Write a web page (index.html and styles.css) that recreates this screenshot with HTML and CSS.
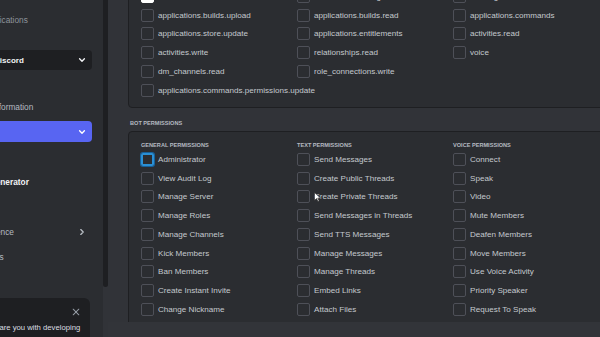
FILE: index.html
```html
<!DOCTYPE html>
<html lang="en">
<head>
    <meta charset="UTF-8">
    <meta name="viewport" content="width=device-width">
    <title>OAuth2 URL Generator</title>
    <link rel="stylesheet" href="styles.css">
</head>
<body>
<div class="app">
    <aside class="sidebar">
        <nav class="nav">
            <a class="back">
                <svg width="8" height="8" viewBox="0 0 10 10"><path d="M8.5 5H1.5M4.5 2 1.5 5l3 3" fill="none" stroke="currentColor" stroke-width="1.4" stroke-linecap="round" stroke-linejoin="round"/></svg>
                <span>All Applications</span>
            </a>
            <div class="app-select">
                <span class="avatar"></span>
                <span class="app-name">Discord</span>
                <svg class="chev" width="8" height="8" viewBox="0 0 10 10"><path d="M2 3.5l3 3 3-3" fill="none" stroke="currentColor" stroke-width="1.7" stroke-linecap="round" stroke-linejoin="round"/></svg>
            </div>
            <a class="nav-item">General Information</a>
            <a class="nav-item active">OAuth2
                <svg class="chev" width="8" height="8" viewBox="0 0 10 10"><path d="M2 3.5l3 3 3-3" fill="none" stroke="currentColor" stroke-width="1.7" stroke-linecap="round" stroke-linejoin="round"/></svg>
            </a>
            <a class="nav-item sub">General</a>
            <a class="nav-item sub current">URL Generator</a>
            <a class="nav-item">Bot</a>
            <a class="nav-item">Rich Presence
                <svg class="chev" width="8" height="8" viewBox="0 0 10 10"><path d="M3.5 2l3 3-3 3" fill="none" stroke="currentColor" stroke-width="1.7" stroke-linecap="round" stroke-linejoin="round"/></svg>
            </a>
            <a class="nav-item">App Testers</a>
        </nav>
    </aside>
    <div class="scroll-track"><div class="thumb"></div></div>

    <main class="main">
        <div class="content">
            <section class="panel scopes">
                <label class="check"><span class="box checked"></span>bot</label>
                <label class="check"><span class="box"></span>webhook.incoming</label>
                <label class="check"><span class="box"></span>messages.read</label>
                <label class="check"><span class="box"></span>applications.builds.upload</label>
                <label class="check"><span class="box"></span>applications.builds.read</label>
                <label class="check"><span class="box"></span>applications.commands</label>
                <label class="check"><span class="box"></span>applications.store.update</label>
                <label class="check"><span class="box"></span>applications.entitlements</label>
                <label class="check"><span class="box"></span>activities.read</label>
                <label class="check"><span class="box"></span>activities.write</label>
                <label class="check"><span class="box"></span>relationships.read</label>
                <label class="check"><span class="box"></span>voice</label>
                <label class="check"><span class="box"></span>dm_channels.read</label>
                <label class="check"><span class="box"></span>role_connections.write</label>
                <label class="check wide"><span class="box"></span>applications.commands.permissions.update</label>
            </section>

            <h5 class="section-title">Bot Permissions</h5>
            <section class="panel perms">
                <div class="perm-col">
                    <h6>General Permissions</h6>
                    <label class="check"><span class="box focus"></span>Administrator</label>
                    <label class="check"><span class="box"></span>View Audit Log</label>
                    <label class="check"><span class="box"></span>Manage Server</label>
                    <label class="check"><span class="box"></span>Manage Roles</label>
                    <label class="check"><span class="box"></span>Manage Channels</label>
                    <label class="check"><span class="box"></span>Kick Members</label>
                    <label class="check"><span class="box"></span>Ban Members</label>
                    <label class="check"><span class="box"></span>Create Instant Invite</label>
                    <label class="check"><span class="box"></span>Change Nickname</label>
                    <label class="check"><span class="box"></span>Manage Nicknames</label>
                </div>
                <div class="perm-col">
                    <h6>Text Permissions</h6>
                    <label class="check"><span class="box"></span>Send Messages</label>
                    <label class="check"><span class="box"></span>Create Public Threads</label>
                    <label class="check"><span class="box"></span>Create Private Threads</label>
                    <label class="check"><span class="box"></span>Send Messages in Threads</label>
                    <label class="check"><span class="box"></span>Send TTS Messages</label>
                    <label class="check"><span class="box"></span>Manage Messages</label>
                    <label class="check"><span class="box"></span>Manage Threads</label>
                    <label class="check"><span class="box"></span>Embed Links</label>
                    <label class="check"><span class="box"></span>Attach Files</label>
                    <label class="check"><span class="box"></span>Read Message History</label>
                </div>
                <div class="perm-col">
                    <h6>Voice Permissions</h6>
                    <label class="check"><span class="box"></span>Connect</label>
                    <label class="check"><span class="box"></span>Speak</label>
                    <label class="check"><span class="box"></span>Video</label>
                    <label class="check"><span class="box"></span>Mute Members</label>
                    <label class="check"><span class="box"></span>Deafen Members</label>
                    <label class="check"><span class="box"></span>Move Members</label>
                    <label class="check"><span class="box"></span>Use Voice Activity</label>
                    <label class="check"><span class="box"></span>Priority Speaker</label>
                    <label class="check"><span class="box"></span>Request To Speak</label>
                    <label class="check"><span class="box"></span>Use Embedded Activities</label>
                </div>
            </section>
        </div>
        <div class="footer"></div>
    </main>
</div>

<div class="toast">
    <div class="toast-head">
        <span class="toast-title">Survey</span>
        <svg width="8" height="8" viewBox="0 0 10 10"><path d="M1.5 1.5l7 7M8.5 1.5l-7 7" fill="none" stroke="currentColor" stroke-width="1.3" stroke-linecap="round"/></svg>
    </div>
    <p>How prepared are you with developing</p>
</div>

<svg class="cursor" width="7" height="10" viewBox="0 0 7 10"><path d="M0.5 0.5v8l2-2 1.5 3 1.2-.6-1.5-2.9H6.5z" fill="#fff" stroke="#222" stroke-width=".6"/></svg>
</body>
</html>
```

FILE: styles.css
```css
* {
    box-sizing: border-box;
    margin: 0;
    padding: 0;
}

body {
    width: 600px;
    height: 337px;
    overflow: hidden;
    position: relative;
    background: #313338;
    color: #c4c9ce;
    font-family: "Liberation Sans", Arial, sans-serif;
    font-size: 8.3px;
}

.app {
    display: flex;
    height: 337px;
}

/* sidebar */
.sidebar {
    width: 103px;
    flex: none;
    background: #2b2d31;
    overflow: hidden;
}

.nav {
    width: 142px;
    margin-left: -50px;
    display: flex;
    flex-direction: column;
}

.back {
    height: 20px;
    margin-top: 10px;
    display: flex;
    align-items: center;
    gap: 6px;
    padding-left: 8px;
    color: #8e949c;
}

.app-select {
    height: 20px;
    margin-top: 20px;
    display: flex;
    align-items: center;
    gap: 20px;
    padding: 0 6px 0 10px;
    background: #1e1f22;
    border-radius: 4px;
    color: #f2f3f5;
}

.avatar {
    width: 14px;
    height: 14px;
    border-radius: 50%;
    background: #5865f2;
}

.app-name {
    flex: 1;
    font-size: 8px;
    font-weight: 700;
}

.chev {
    flex: none;
}

.nav-item {
    height: 21px;
    margin-top: 4px;
    display: flex;
    align-items: center;
    justify-content: space-between;
    padding: 0 6px 0 10px;
    border-radius: 4px;
    color: #b5bac1;
    white-space: nowrap;
}

.app-select + .nav-item {
    margin-top: 26px;
}

.nav-item.active {
    background: #5865f2;
    color: #fff;
}

.nav-item.sub {
    padding-left: 20px;
}

.nav-item.current {
    color: #f2f3f5;
    font-weight: 700;
}

.scroll-track {
    width: 5px;
    flex: none;
    background: #313338;
}

.scroll-track .thumb {
    height: 287px;
    background: #1e1f22;
    border-radius: 0 0 3px 3px;
}

/* main */
.main {
    flex: 1;
    min-width: 0;
    display: flex;
    flex-direction: column;
}

.content {
    flex: 1;
    overflow: hidden;
    padding-left: 20px;
}

.footer {
    height: 15px;
    flex: none;
    background: #323439;
}

.panel {
    background: #2b2d31;
    border: 1px solid #1e1f22;
    border-radius: 4px;
    margin-right: -30px;
    padding-left: 12px;
}

.scopes {
    margin-top: -14px;
    padding-bottom: 7px;
    display: grid;
    grid-template-columns: repeat(3, 156px);
    grid-auto-rows: 18.75px;
}

.scopes .wide {
    grid-column: 1 / -1;
}

.check {
    display: flex;
    align-items: center;
    gap: 4px;
    white-space: nowrap;
    font-size: 8.1px;
    color: #c4c9ce;
}

.box {
    width: 13px;
    height: 13px;
    flex: none;
    border: 1px solid #4e5058;
    border-radius: 2px;
}

.box.checked {
    background: #fff;
    border-color: #fff;
}

.box.focus {
    border: 2px solid #2a8fd4;
    box-shadow: 0 0 0 1px #17609a;
}

.section-title,
.perm-col h6 {
    font-size: 5.6px;
    line-height: 8px;
    font-weight: 700;
    text-transform: uppercase;
    color: #b5bac1;
}

.section-title {
    margin: 11px 0 4px 2px;
}

.perms {
    display: flex;
    padding-top: 9px;
}

.perm-col {
    width: 156px;
    flex: none;
    display: flex;
    flex-direction: column;
}

.perm-col h6 {
    margin-bottom: 1.6px;
}

.perm-col .check {
    height: 18.75px;
}

/* toast */
.toast {
    position: absolute;
    left: -63px;
    bottom: 0;
    width: 153px;
    height: 39px;
    padding: 9px 10px 0 12px;
    background: #1e1f22;
    border-radius: 0 6px 0 0;
    color: #dbdee1;
}

.toast-head {
    height: 10px;
    display: flex;
    align-items: center;
    justify-content: space-between;
    color: #949ba4;
}

.toast-title {
    font-weight: 700;
    color: #f2f3f5;
}

.toast p {
    margin-top: 6px;
    white-space: nowrap;
    font-size: 7.7px;
    line-height: 10px;
}

.cursor {
    position: absolute;
    left: 314px;
    top: 192px;
}
```
